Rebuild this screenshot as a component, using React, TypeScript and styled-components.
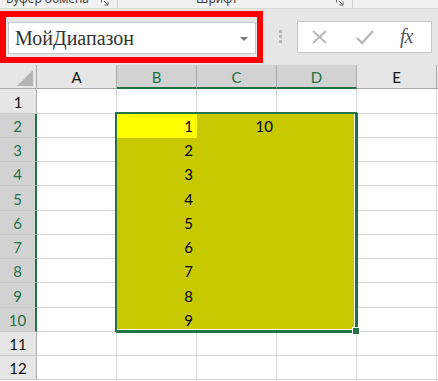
import styled, { createGlobalStyle } from 'styled-components';

const GlobalStyle = createGlobalStyle`
  html, body {
    margin: 0;
    padding: 0;
    background: #ffffff;
    overflow: hidden;
  }
`;

const GREEN = '#217346';
const COL_W = 80;
const HEAD_W = 37;
const HEAD_H = 24;
const ROW_H = [25, 24, 24, 24, 25, 24, 24, 24, 25, 24, 24, 24];
const COLS = ['A', 'B', 'C', 'D', 'E'];

const Page = styled.div`
  width: 438px;
  height: 381px;
  overflow: hidden;
  background: #ffffff;
`;

const Toolbar = styled.div`
  height: 65px;
  background: #e6e6e6;
  display: flex;
  flex-direction: column;
`;

const RibbonStrip = styled.div`
  height: 8px;
  display: flex;
  background: #f1f1f1;
  border-bottom: 1px solid #d9d9d9;
  overflow: hidden;
`;

const RibbonGroup = styled.div<{ $w: number }>`
  width: ${(p) => p.$w}px;
  flex: none;
  display: flex;
  justify-content: space-between;
  padding: 0 8px 0 6px;
  box-sizing: border-box;
  border-right: 1px solid #d0d0d0;
`;

const RibbonLabel = styled.span<{ $indent?: number }>`
  margin-top: -8px;
  margin-left: ${(p) => p.$indent || 0}px;
  font-family: 'Noto Sans', 'Liberation Sans', sans-serif;
  font-size: 12px;
  line-height: 14px;
  color: #444;
  white-space: nowrap;
`;

const Launcher = styled.svg`
  margin-top: -2px;
  width: 8px;
  height: 8px;
`;

const FormulaRow = styled.div`
  display: flex;
  align-items: center;
  margin-top: 2px;
`;

const Highlight = styled.div`
  width: 263px;
  height: 52px;
  box-sizing: border-box;
  border: 6px solid #ff0000;
  padding: 5px 1px 3px 2px;
  display: flex;
`;

const NameBox = styled.div`
  flex: 1;
  background: #ffffff;
  border: 1px solid #c6c6c6;
  display: flex;
  align-items: center;
  justify-content: space-between;
  padding: 0 7px 0 6px;
`;

const NameText = styled.span`
  font-family: 'Liberation Serif', 'DejaVu Serif', serif;
  font-size: 20px;
  color: #333;
  padding-top: 1px;
`;

const DropArrow = styled.div`
  width: 0;
  height: 0;
  border-left: 4px solid transparent;
  border-right: 4px solid transparent;
  border-top: 4px solid #777;
  margin-top: 2px;
`;

const Grip = styled.div`
  width: 34px;
  display: flex;
  flex-direction: column;
  align-items: center;
  gap: 2px;
  margin-top: -2px;

  & > span {
    width: 3px;
    height: 3px;
    background: #b3b3b3;
  }
`;

const FormulaBox = styled.div`
  width: 135px;
  height: 32px;
  box-sizing: border-box;
  background: #ffffff;
  border: 1px solid #c6c6c6;
  display: flex;
  align-items: center;
  padding-left: 14px;
  gap: 0;
`;

const IconSlot = styled.div`
  width: 44px;
  height: 16px;
  display: flex;
  align-items: center;
`;

const Fx = styled.span`
  font-family: 'Liberation Serif', 'DejaVu Serif', serif;
  font-style: italic;
  font-size: 20px;
  color: #555;
  letter-spacing: -1px;
  margin-top: -2px;
`;

const Sheet = styled.div`
  position: relative;
  display: grid;
  grid-template-columns: ${HEAD_W}px repeat(5, ${COL_W}px) 1fr;
  grid-template-rows: ${HEAD_H}px ${ROW_H.map((h) => h + 'px').join(' ')};
  font-family: Lato, 'Liberation Sans', sans-serif;
  font-size: 15px;
`;

const Corner = styled.div`
  background: #e6e6e6;
  border-right: 1px solid #ababab;
  border-bottom: 1px solid #ababab;
  position: relative;
  box-sizing: border-box;

  & > svg {
    position: absolute;
    right: 3px;
    bottom: 2px;
  }
`;

const ColHeader = styled.div<{ $active?: boolean }>`
  box-sizing: border-box;
  background: ${(p) => (p.$active ? '#d2d2d2' : '#e6e6e6')};
  color: ${(p) => (p.$active ? GREEN : '#111')};
  border-right: 1px solid #ababab;
  border-bottom: ${(p) => (p.$active ? `2px solid ${GREEN}` : '1px solid #ababab')};
  display: flex;
  align-items: center;
  justify-content: center;
  padding-top: 1px;
`;

const RowHeader = styled.div<{ $active?: boolean }>`
  box-sizing: border-box;
  background: ${(p) => (p.$active ? '#d2d2d2' : '#e6e6e6')};
  color: ${(p) => (p.$active ? GREEN : '#111')};
  border-right: ${(p) => (p.$active ? `2px solid ${GREEN}` : '1px solid #ababab')};
  border-bottom: 1px solid #c8c8c8;
  display: flex;
  align-items: flex-end;
  justify-content: center;
  padding-bottom: 2px;
  line-height: 18px;
`;

const Cell = styled.div<{ $fill?: string }>`
  box-sizing: border-box;
  background: ${(p) => p.$fill || '#ffffff'};
  border-right: 1px solid ${(p) => p.$fill || '#d4d4d4'};
  border-bottom: 1px solid ${(p) => p.$fill || '#d4d4d4'};
  display: flex;
  align-items: flex-end;
  justify-content: flex-end;
  padding: 0 3px 2px 0;
  line-height: 18px;
  color: #000;
`;

const Selection = styled.div`
  position: absolute;
  box-sizing: border-box;
  border: 2px solid ${GREEN};
  box-shadow: inset -1px -1px 0 #ffffff, 1px 1px 0 ${GREEN};
  pointer-events: none;
`;

const FillHandle = styled.div`
  position: absolute;
  width: 6px;
  height: 6px;
  background: ${GREEN};
  border: 1px solid #ffffff;
`;

const values: Record<string, string> = {
  B2: '1', B3: '2', B4: '3', B5: '4', B6: '5', B7: '6', B8: '7', B9: '8', B10: '9',
  C2: '10',
};

const fillFor = (col: string, row: number) => {
  if (col === 'B' && row === 2) return '#ffff00';
  if (['B', 'C', 'D'].includes(col) && row >= 2 && row <= 10) return '#c8c800';
  return undefined;
};

const rowTop = (row: number) => HEAD_H + ROW_H.slice(0, row - 1).reduce((a, b) => a + b, 0);

const App = () => {
  const selLeft = HEAD_W + COL_W - 2;
  const selTop = rowTop(2) - 2;
  const selW = 3 * COL_W + 2;
  const selH = rowTop(11) - rowTop(2) + 2;

  return (
    <Page>
      <GlobalStyle />
      <Toolbar>
        <RibbonStrip>
          <RibbonGroup $w={118}>
            <RibbonLabel>Буфер обмена</RibbonLabel>
            <Launcher viewBox="0 0 8 8">
              <path d="M0.5 0.5h4M0.5 0.5v4M3 3l4 4M7 3.5v3.5h-3.5" stroke="#666" strokeWidth="1" fill="none" />
            </Launcher>
          </RibbonGroup>
          <RibbonGroup $w={235}>
            <RibbonLabel $indent={72}>Шрифт</RibbonLabel>
            <Launcher viewBox="0 0 8 8">
              <path d="M0.5 0.5h4M0.5 0.5v4M3 3l4 4M7 3.5v3.5h-3.5" stroke="#666" strokeWidth="1" fill="none" />
            </Launcher>
          </RibbonGroup>
        </RibbonStrip>
        <FormulaRow>
          <Highlight>
            <NameBox>
              <NameText>МойДиапазон</NameText>
              <DropArrow />
            </NameBox>
          </Highlight>
          <Grip>
            <span />
            <span />
            <span />
          </Grip>
          <FormulaBox>
            <IconSlot>
              <svg width="15" height="14" viewBox="0 0 15 14">
                <path d="M1 1l13 12M14 1L1 13" stroke="#b9b9b9" strokeWidth="2" fill="none" />
              </svg>
            </IconSlot>
            <IconSlot>
              <svg width="18" height="15" viewBox="0 0 18 15">
                <path d="M1 8l5 5L17 1" stroke="#b9b9b9" strokeWidth="2.4" fill="none" />
              </svg>
            </IconSlot>
            <Fx>fx</Fx>
          </FormulaBox>
        </FormulaRow>
      </Toolbar>

      <Sheet>
        <Corner>
          <svg width="16" height="16" viewBox="0 0 16 16">
            <path d="M16 0V16H0Z" fill="#b4b4b4" />
          </svg>
        </Corner>
        {COLS.map((c) => (
          <ColHeader key={c} $active={['B', 'C', 'D'].includes(c)}>
            {c}
          </ColHeader>
        ))}
        <ColHeader />
        {ROW_H.map((_, i) => {
          const row = i + 1;
          return [
            <RowHeader key={`h${row}`} $active={row >= 2 && row <= 10}>
              {row}
            </RowHeader>,
            ...COLS.map((c) => (
              <Cell key={`${c}${row}`} $fill={fillFor(c, row)}>
                {values[`${c}${row}`]}
              </Cell>
            )),
            <Cell key={`F${row}`} />,
          ];
        })}
        <Selection style={{ left: selLeft, top: selTop, width: selW, height: selH }} />
        <FillHandle style={{ left: selLeft + selW - 5, top: selTop + selH - 5 }} />
      </Sheet>
    </Page>
  );
};

export default App;
